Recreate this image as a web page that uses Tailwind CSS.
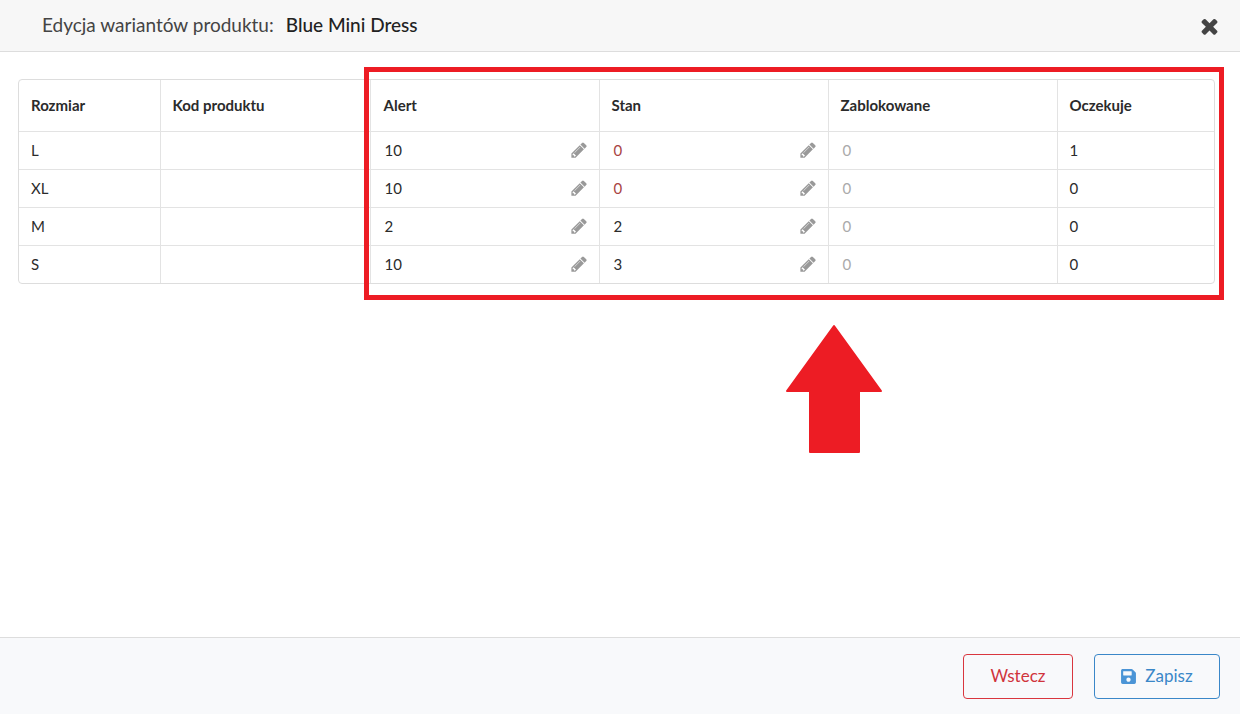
<!DOCTYPE html>
<html lang="pl">
<head>
  <meta charset="UTF-8" />
  <title>Edycja wariantów produktu</title>
  <script src="https://cdn.jsdelivr.net/npm/@tailwindcss/browser@4"></script>
</head>
<body class="bg-white font-[Lato,sans-serif] text-[#2b2b2b] overflow-hidden">
  <div class="relative flex flex-col h-[714px] w-[1240px]">
    <!-- Naglowek -->
    <header class="flex items-center justify-between h-[52px] pl-[42px] pr-[21px] bg-[#f7f7f7] border-b border-[#dddddd]">
      <h1 class="flex items-center text-[19px] text-[#444444]">
        Edycja wariantów produktu:
        <span class="ml-3 font-medium text-[#222222]">Blue Mini Dress</span>
      </h1>
      <svg class="w-[19px] h-6 fill-[#444444]" viewBox="0 0 1408 1792"><path d="M1298 1322q0 40-28 68l-136 136q-28 28-68 28t-68-28l-294-294-294 294q-28 28-68 28t-68-28l-136-136q-28-28-28-68t28-68l294-294-294-294q-28-28-28-68t28-68l136-136q28-28 68-28t68 28l294 294 294-294q28-28 68-28t68 28l136 136q28 28 28 68t-28 68l-294 294 294 294q28 28 28 68z"/></svg>
    </header>

    <!-- Tabela -->
    <main class="flex-1 pt-[27px] pl-[18px] pr-[25px]">
      <div class="border border-[#dddddd] rounded-[4px] overflow-hidden">
        <table class="w-full table-fixed border-collapse text-[15px]">
          <colgroup>
            <col class="w-[141px]" />
            <col class="w-[210px]" />
            <col class="w-[229px]" />
            <col class="w-[229px]" />
            <col class="w-[229px]" />
            <col />
          </colgroup>
          <thead>
            <tr class="h-[51px] font-bold text-left">
              <th class="pl-3 font-bold border-b border-r border-[#e3e3e3]">Rozmiar</th>
              <th class="pl-3 font-bold border-b border-r border-[#e3e3e3]">Kod produktu</th>
              <th class="pl-[13px] font-bold border-b border-r border-[#e3e3e3]">Alert</th>
              <th class="pl-3 font-bold border-b border-r border-[#e3e3e3]">Stan</th>
              <th class="pl-3 font-bold border-b border-r border-[#e3e3e3]">Zablokowane</th>
              <th class="pl-3 font-bold border-b border-[#e3e3e3]">Oczekuje</th>
            </tr>
          </thead>
          <tbody>
            <tr class="h-[38px]">
              <td class="pl-3 border-b border-r border-[#e3e3e3]">L</td>
              <td class="border-b border-r border-[#e3e3e3]"></td>
              <td class="pl-3.5 border-b border-r border-[#e3e3e3]"><div class="flex items-center justify-between pr-3">10<svg class="w-4 h-[18px] fill-[#999999]" viewBox="0 0 1515 1792"><path d="M363 1536l91-91-235-235-91 91v107h128v128h107zm523-928q0-22-22-22-10 0-17 7l-542 542q-7 7-7 17 0 22 22 22 10 0 17-7l542-542q7-7 7-17zm-54-192l416 416-832 832h-416v-416zm683 96q0 53-37 90l-166 166-416-416 166-165q36-38 90-38 53 0 91 38l235 234q37 39 37 91z"/></svg></div></td>
              <td class="pl-3.5 border-b border-r border-[#e3e3e3]"><div class="flex items-center justify-between pr-3 text-[#a94442]">0<svg class="w-4 h-[18px] fill-[#999999]" viewBox="0 0 1515 1792"><path d="M363 1536l91-91-235-235-91 91v107h128v128h107zm523-928q0-22-22-22-10 0-17 7l-542 542q-7 7-7 17 0 22 22 22 10 0 17-7l542-542q7-7 7-17zm-54-192l416 416-832 832h-416v-416zm683 96q0 53-37 90l-166 166-416-416 166-165q36-38 90-38 53 0 91 38l235 234q37 39 37 91z"/></svg></div></td>
              <td class="pl-3.5 text-[#aaaaaa] border-b border-r border-[#e3e3e3]">0</td>
              <td class="pl-3 border-b border-[#e3e3e3]">1</td>
            </tr>
            <tr class="h-[38px]">
              <td class="pl-3 border-b border-r border-[#e3e3e3]">XL</td>
              <td class="border-b border-r border-[#e3e3e3]"></td>
              <td class="pl-3.5 border-b border-r border-[#e3e3e3]"><div class="flex items-center justify-between pr-3">10<svg class="w-4 h-[18px] fill-[#999999]" viewBox="0 0 1515 1792"><path d="M363 1536l91-91-235-235-91 91v107h128v128h107zm523-928q0-22-22-22-10 0-17 7l-542 542q-7 7-7 17 0 22 22 22 10 0 17-7l542-542q7-7 7-17zm-54-192l416 416-832 832h-416v-416zm683 96q0 53-37 90l-166 166-416-416 166-165q36-38 90-38 53 0 91 38l235 234q37 39 37 91z"/></svg></div></td>
              <td class="pl-3.5 border-b border-r border-[#e3e3e3]"><div class="flex items-center justify-between pr-3 text-[#a94442]">0<svg class="w-4 h-[18px] fill-[#999999]" viewBox="0 0 1515 1792"><path d="M363 1536l91-91-235-235-91 91v107h128v128h107zm523-928q0-22-22-22-10 0-17 7l-542 542q-7 7-7 17 0 22 22 22 10 0 17-7l542-542q7-7 7-17zm-54-192l416 416-832 832h-416v-416zm683 96q0 53-37 90l-166 166-416-416 166-165q36-38 90-38 53 0 91 38l235 234q37 39 37 91z"/></svg></div></td>
              <td class="pl-3.5 text-[#aaaaaa] border-b border-r border-[#e3e3e3]">0</td>
              <td class="pl-3 border-b border-[#e3e3e3]">0</td>
            </tr>
            <tr class="h-[38px]">
              <td class="pl-3 border-b border-r border-[#e3e3e3]">M</td>
              <td class="border-b border-r border-[#e3e3e3]"></td>
              <td class="pl-3.5 border-b border-r border-[#e3e3e3]"><div class="flex items-center justify-between pr-3">2<svg class="w-4 h-[18px] fill-[#999999]" viewBox="0 0 1515 1792"><path d="M363 1536l91-91-235-235-91 91v107h128v128h107zm523-928q0-22-22-22-10 0-17 7l-542 542q-7 7-7 17 0 22 22 22 10 0 17-7l542-542q7-7 7-17zm-54-192l416 416-832 832h-416v-416zm683 96q0 53-37 90l-166 166-416-416 166-165q36-38 90-38 53 0 91 38l235 234q37 39 37 91z"/></svg></div></td>
              <td class="pl-3.5 border-b border-r border-[#e3e3e3]"><div class="flex items-center justify-between pr-3">2<svg class="w-4 h-[18px] fill-[#999999]" viewBox="0 0 1515 1792"><path d="M363 1536l91-91-235-235-91 91v107h128v128h107zm523-928q0-22-22-22-10 0-17 7l-542 542q-7 7-7 17 0 22 22 22 10 0 17-7l542-542q7-7 7-17zm-54-192l416 416-832 832h-416v-416zm683 96q0 53-37 90l-166 166-416-416 166-165q36-38 90-38 53 0 91 38l235 234q37 39 37 91z"/></svg></div></td>
              <td class="pl-3.5 text-[#aaaaaa] border-b border-r border-[#e3e3e3]">0</td>
              <td class="pl-3 border-b border-[#e3e3e3]">0</td>
            </tr>
            <tr class="h-[38px]">
              <td class="pl-3 border-r border-[#e3e3e3]">S</td>
              <td class="border-r border-[#e3e3e3]"></td>
              <td class="pl-3.5 border-r border-[#e3e3e3]"><div class="flex items-center justify-between pr-3">10<svg class="w-4 h-[18px] fill-[#999999]" viewBox="0 0 1515 1792"><path d="M363 1536l91-91-235-235-91 91v107h128v128h107zm523-928q0-22-22-22-10 0-17 7l-542 542q-7 7-7 17 0 22 22 22 10 0 17-7l542-542q7-7 7-17zm-54-192l416 416-832 832h-416v-416zm683 96q0 53-37 90l-166 166-416-416 166-165q36-38 90-38 53 0 91 38l235 234q37 39 37 91z"/></svg></div></td>
              <td class="pl-3.5 border-r border-[#e3e3e3]"><div class="flex items-center justify-between pr-3">3<svg class="w-4 h-[18px] fill-[#999999]" viewBox="0 0 1515 1792"><path d="M363 1536l91-91-235-235-91 91v107h128v128h107zm523-928q0-22-22-22-10 0-17 7l-542 542q-7 7-7 17 0 22 22 22 10 0 17-7l542-542q7-7 7-17zm-54-192l416 416-832 832h-416v-416zm683 96q0 53-37 90l-166 166-416-416 166-165q36-38 90-38 53 0 91 38l235 234q37 39 37 91z"/></svg></div></td>
              <td class="pl-3.5 text-[#aaaaaa] border-r border-[#e3e3e3]">0</td>
              <td class="pl-3">0</td>
            </tr>
          </tbody>
        </table>
      </div>
    </main>

    <!-- Stopka -->
    <footer class="flex items-center justify-end gap-[21px] h-[77px] pr-5 bg-[#f8f9fb] border-t border-[#dddddd]">
      <button class="w-[110px] h-[45px] rounded-[4px] border border-[#d9363e] text-[17px] text-[#d0343c]">Wstecz</button>
      <button class="flex items-center justify-center gap-[9px] w-[126px] h-[45px] rounded-[4px] border border-[#3a87c8] text-[17px] text-[#3a87c8]">
        <svg class="w-[15px] h-[17px] fill-[#4a94d6]" viewBox="0 0 448 512"><path d="M433.941 129.941l-83.882-83.882A48 48 0 0 0 316.118 32H48C21.490 32 0 53.490 0 80v352c0 26.510 21.490 48 48 48h352c26.510 0 48-21.490 48-48V163.882a48 48 0 0 0-14.059-33.941zM224 416c-35.346 0-64-28.654-64-64 0-35.346 28.654-64 64-64s64 28.654 64 64c0 35.346-28.654 64-64 64zm96-304.520V212c0 6.627-5.373 12-12 12H76c-6.627 0-12-5.373-12-12V108c0-6.627 5.373-12 12-12h228.520c3.183 0 6.235 1.264 8.485 3.515l3.480 3.480A11.996 11.996 0 0 1 320 111.480z"/></svg>
        Zapisz
      </button>
    </footer>

    <!-- Adnotacje na zrzucie -->
    <div class="absolute left-[364px] top-[67px] w-[860px] h-[233px] border-[5px] border-[#ed1c24]"></div>
    <svg class="absolute left-[780px] top-[320px] w-[108px] h-[140px]" viewBox="0 0 108 140"><path d="M54 6 L101 71 L79 71 L79 132 L30 132 L30 71 L7 71 Z" fill="#ed1c24" stroke="#ed1c24" stroke-width="2" stroke-linejoin="round"/></svg>
  </div>
</body>
</html>
